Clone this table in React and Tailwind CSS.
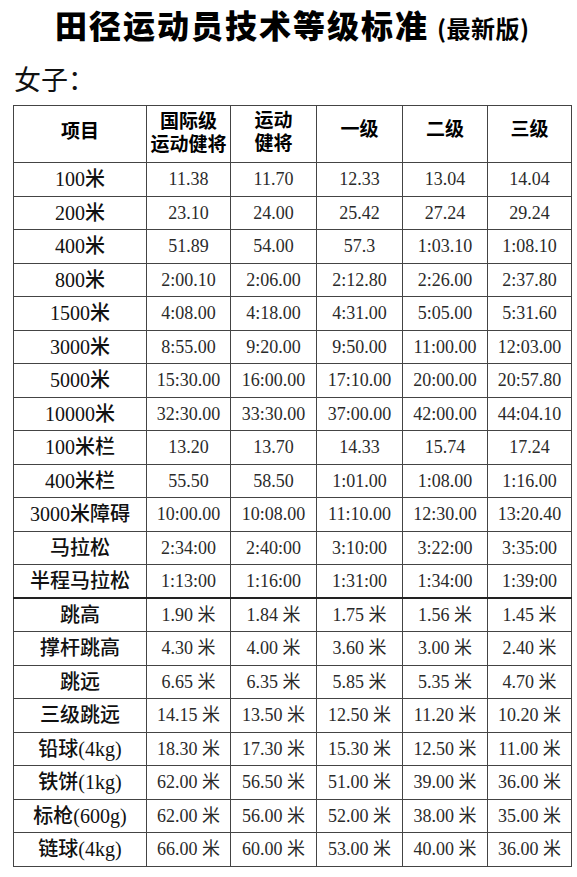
const rows = [
  ["100米", "11.38", "11.70", "12.33", "13.04", "14.04"],
  ["200米", "23.10", "24.00", "25.42", "27.24", "29.24"],
  ["400米", "51.89", "54.00", "57.3", "1:03.10", "1:08.10"],
  ["800米", "2:00.10", "2:06.00", "2:12.80", "2:26.00", "2:37.80"],
  ["1500米", "4:08.00", "4:18.00", "4:31.00", "5:05.00", "5:31.60"],
  ["3000米", "8:55.00", "9:20.00", "9:50.00", "11:00.00", "12:03.00"],
  ["5000米", "15:30.00", "16:00.00", "17:10.00", "20:00.00", "20:57.80"],
  ["10000米", "32:30.00", "33:30.00", "37:00.00", "42:00.00", "44:04.10"],
  ["100米栏", "13.20", "13.70", "14.33", "15.74", "17.24"],
  ["400米栏", "55.50", "58.50", "1:01.00", "1:08.00", "1:16.00"],
  ["3000米障碍", "10:00.00", "10:08.00", "11:10.00", "12:30.00", "13:20.40"],
  ["马拉松", "2:34:00", "2:40:00", "3:10:00", "3:22:00", "3:35:00"],
  ["半程马拉松", "1:13:00", "1:16:00", "1:31:00", "1:34:00", "1:39:00"],
  ["跳高", "1.90 米", "1.84 米", "1.75 米", "1.56 米", "1.45 米"],
  ["撑杆跳高", "4.30 米", "4.00 米", "3.60 米", "3.00 米", "2.40 米"],
  ["跳远", "6.65 米", "6.35 米", "5.85 米", "5.35 米", "4.70 米"],
  ["三级跳远", "14.15 米", "13.50 米", "12.50 米", "11.20 米", "10.20 米"],
  ["铅球(4kg)", "18.30 米", "17.30 米", "15.30 米", "12.50 米", "11.00 米"],
  ["铁饼(1kg)", "62.00 米", "56.50 米", "51.00 米", "39.00 米", "36.00 米"],
  ["标枪(600g)", "62.00 米", "56.00 米", "52.00 米", "38.00 米", "35.00 米"],
  ["链球(4kg)", "66.00 米", "60.00 米", "53.00 米", "40.00 米", "36.00 米"],
]

const serif = "font-['Liberation_Serif','Noto_Sans_CJK_SC',serif]"

export default function App() {
  return (
    <div className="w-[577px] h-[877px] bg-white text-[#1a1a1a] overflow-hidden font-['Noto_Sans_CJK_SC',sans-serif]">
      {/* Title */}
      <div className="flex items-baseline pl-[55px] pt-[2px] h-[52px]">
        <h1 className="text-[32px] font-black tracking-[2px] leading-[44px] text-black">
          田径运动员技术等级标准
        </h1>
        <span className="ml-[8px] text-[24px] font-bold tracking-[0.5px] text-black">(最新版)</span>
      </div>

      <div className="pl-[14px] h-[53px] pt-[9px] text-[27px] leading-[36px] text-[#111]">女子：</div>

      <table className={`ml-[13px] w-[558px] border-collapse border-[1.5px] border-[#333] table-fixed ${serif}`}>
        <colgroup>
          <col className="w-[133px]" />
          <col className="w-[84px]" />
          <col className="w-[86px]" />
          <col className="w-[86px]" />
          <col className="w-[85px]" />
          <col className="w-[84px]" />
        </colgroup>
        <thead>
          <tr className="h-[57px] text-black">
            <th className="border border-[#444] text-[19px] font-bold pb-[4px]">项目</th>
            <th className="border border-[#444] text-[19px] font-bold leading-[23px] pb-[2px]">
              国际级
              <br />
              运动健将
            </th>
            <th className="border border-[#444] text-[19px] font-bold leading-[23px] align-top pt-[3px]">
              运动
              <br />
              健将
            </th>
            <th className="border border-[#444] text-[19px] font-bold pb-[8px]">一级</th>
            <th className="border border-[#444] text-[19px] font-bold pb-[8px]">二级</th>
            <th className="border border-[#444] text-[19px] font-bold pb-[8px]">三级</th>
          </tr>
        </thead>
        <tbody>
          {rows.map((row, i) => (
            <tr key={row[0]} className="h-[33.5px]">
              {row.map((cell, j) => (
                <td
                  key={j}
                  className={
                    j === 0
                      ? `border border-[#444] text-center text-[20px] leading-[24px] text-[#111] font-medium ${i === 12 ? "border-b-2 border-b-[#222]" : ""}`
                      : `border border-[#444] text-center text-[18px] leading-[22px] text-[#2a2a2a] ${i === 12 ? "border-b-2 border-b-[#222]" : ""}`
                  }
                >
                  {cell}
                </td>
              ))}
            </tr>
          ))}
        </tbody>
      </table>
    </div>
  )
}
